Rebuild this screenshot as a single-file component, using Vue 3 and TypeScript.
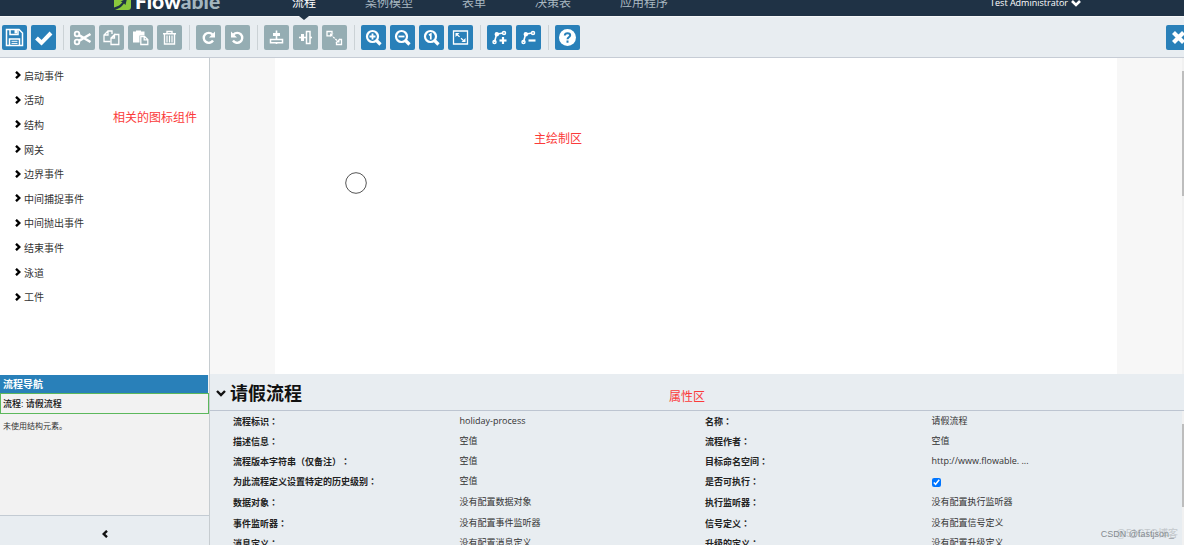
<script setup lang="ts">
import { ref } from 'vue'

interface Tool {
  name: string
  title: string
  disabled?: boolean
}

interface Property {
  label: string
  value: string | boolean
}

const menu = ['流程', '案例模型', '表单', '决策表', '应用程序']

const toolGroups: Tool[][] = [
  [
    { name: 'save', title: '保存' },
    { name: 'check', title: '验证' },
  ],
  [
    { name: 'cut', title: '剪切', disabled: true },
    { name: 'copy', title: '复制', disabled: true },
    { name: 'paste', title: '粘贴', disabled: true },
    { name: 'trash', title: '删除', disabled: true },
  ],
  [
    { name: 'redo', title: '重做', disabled: true },
    { name: 'undo', title: '撤销', disabled: true },
  ],
  [
    { name: 'alignV', title: '垂直对齐', disabled: true },
    { name: 'alignH', title: '水平对齐', disabled: true },
    { name: 'sameSize', title: '相同大小', disabled: true },
  ],
  [
    { name: 'zoomIn', title: '放大' },
    { name: 'zoomOut', title: '缩小' },
    { name: 'zoomOne', title: '实际大小' },
    { name: 'zoomFit', title: '适合窗口' },
  ],
  [
    { name: 'bendAdd', title: '添加弯曲点' },
    { name: 'bendRemove', title: '移除弯曲点' },
  ],
  [{ name: 'help', title: '帮助' }],
]

const palette = [
  '启动事件', '活动', '结构', '网关', '边界事件',
  '中间捕捉事件', '中间抛出事件', '结束事件', '泳道', '工件',
]

const properties = ref<Property[]>([
  { label: '流程标识', value: 'holiday-process' },
  { label: '名称', value: '请假流程' },
  { label: '描述信息', value: '空值' },
  { label: '流程作者', value: '空值' },
  { label: '流程版本字符串（仅备注）', value: '空值' },
  { label: '目标命名空间', value: 'http://www.flowable. ...' },
  { label: '为此流程定义设置特定的历史级别', value: '空值' },
  { label: '是否可执行', value: true },
  { label: '数据对象', value: '没有配置数据对象' },
  { label: '执行监听器', value: '没有配置执行监听器' },
  { label: '事件监听器', value: '没有配置事件监听器' },
  { label: '信号定义', value: '没有配置信号定义' },
  { label: '消息定义', value: '没有配置消息定义' },
  { label: '升级的定义', value: '没有配置升级定义' },
])
</script>

<template>
  <div class="page">
    <header class="topbar">
      <a class="logo" href="#">
        <svg class="leaf" viewBox="0 0 17 17" aria-hidden="true">
          <path d="M3 0H17V14Q17 17 14 17H0V3Q0 0 3 0Z" fill="#8ac73c" />
          <path d="M0 14.500Q6 13 8.500 9L6.500 8.500L13 5.500L11.500 12L10 10.500Q7 15 1 17L0 17Z" fill="#1f3245" />
        </svg>
        <span class="wordmark">Flow<span class="dim">able</span></span>
      </a>
      <nav class="menu">
        <a v-for="(item, i) in menu" :key="item" href="#" :class="{ active: i === 0 }">{{ item }}</a>
      </nav>
      <button class="user" type="button">
        Test Administrator
        <svg viewBox="0 0 10 8" aria-hidden="true"><path d="M1 2L5 6L9 2" fill="none" stroke="#fff" stroke-width="2.600" /></svg>
      </button>
    </header>

    <div class="toolbar">
      <div v-for="(group, g) in toolGroups" :key="g" class="group">
        <button v-for="tool in group" :key="tool.name" class="tool" type="button" :title="tool.title" :aria-label="tool.title" :disabled="tool.disabled">
          <svg viewBox="0 0 25 25" fill="none" stroke="#fff" stroke-width="1.500" aria-hidden="true">
            <template v-if="tool.name === 'save'">
              <path d="M4.500 4.500H17L20.500 8V20.500H4.500Z" />
              <path d="M8 4.500V9.500H16V4.500M7.500 20.500V14H17.500V20.500" />
              <path d="M12.500 5H15V8.500H12.500Z" fill="#fff" stroke="none" />
              <path d="M9.500 16.300H15.500M9.500 18.400H15.500" stroke-width="1" />
            </template>
            <path v-else-if="tool.name === 'check'" d="M5.500 13L10.500 17.800L20 8" stroke-width="4" />
            <template v-else-if="tool.name === 'cut'">
              <circle cx="7" cy="9" r="2.300" stroke-width="1.800" />
              <circle cx="7" cy="17" r="2.300" stroke-width="1.800" />
              <path d="M9 10.200L20.500 17M9 15.800L20.500 9" stroke-width="2.500" />
            </template>
            <template v-else-if="tool.name === 'copy'">
              <path d="M11.500 16.500H5V10L9 6H13V9M9 6V10H5" stroke-width="1.300" />
              <path d="M15.500 9.500H19.800V19.500H12V13L15.500 9.500V13H12" stroke-width="1.300" />
            </template>
            <template v-else-if="tool.name === 'paste'">
              <path d="M5 6.500H8V5.500H13V6.500H16.500V10.500H11.500V17.500H5Z" fill="#fff" stroke="none" />
              <path d="M12.800 11.500H16.500L19.800 14.500V19.500H12.800ZM16.200 11.500V14.800H19.800" stroke-width="1.300" />
            </template>
            <template v-else-if="tool.name === 'trash'">
              <path d="M7.500 9.500V19H17.500V9.500M6 8.700H19M10 8.500V6.500H15V8.500" stroke-width="1.400" />
              <path d="M10 10.500V17.500M12.500 10.500V17.500M15 10.500V17.500" stroke-width="1.200" />
            </template>
            <template v-else-if="tool.name === 'redo'">
              <path d="M16.500 9.500A5 5 0 1 0 17 15.500" stroke-width="2.400" />
              <path d="M19 6.500V12.500H13Z" fill="#fff" stroke="none" />
            </template>
            <template v-else-if="tool.name === 'undo'">
              <path d="M8.500 9.500A5 5 0 1 1 8 15.500" stroke-width="2.400" />
              <path d="M6 6.500V12.500H12Z" fill="#fff" stroke="none" />
            </template>
            <template v-else-if="tool.name === 'alignV'">
              <path d="M12.500 5.500V19" stroke-width="1.600" />
              <path d="M9 8H16V11H9Z" fill="#fff" stroke="none" />
              <path d="M6.500 14.500H18.500V17.800H6.500Z" fill="#95adb3" />
            </template>
            <template v-else-if="tool.name === 'alignH'">
              <path d="M6 12.500H19" stroke-width="1.600" />
              <path d="M8 9H11V16H8Z" fill="#fff" stroke="none" />
              <path d="M13.500 6.500H17V18.500H13.500Z" fill="#95adb3" />
            </template>
            <template v-else-if="tool.name === 'sameSize'">
              <path d="M8.500 10.800H5V6.500H10V8.500M17 14.500H19.500V19.500H14.500V17" stroke-width="1.300" />
              <path d="M9 10L15.500 16" stroke-width="1.300" stroke-dasharray="2 1" />
              <path d="M8 8.500H11.500L8 12ZM17.500 17.500H13.500L17.500 13.500Z" fill="#fff" stroke="none" />
            </template>
            <template v-else-if="tool.name.startsWith('zoom') && tool.name !== 'zoomFit'">
              <circle cx="11.500" cy="11.500" r="5.500" stroke-width="2.200" />
              <path d="M15.500 15.500L19.500 19.500" stroke-width="3.200" />
              <path v-if="tool.name === 'zoomIn'" d="M8.500 11.500H14.500M11.500 8.500V14.500" stroke-width="1.800" />
              <path v-else-if="tool.name === 'zoomOut'" d="M8.500 11.500H14.500" stroke-width="1.800" />
              <path v-else d="M10 10.200L11.800 9V14.500" stroke-width="1.700" />
            </template>
            <template v-else-if="tool.name === 'zoomFit'">
              <path d="M5.500 6H19.500V19H5.500Z" stroke-width="1.300" />
              <path d="M9 9.500L16 16" stroke-width="1.300" stroke-dasharray="3.500 2" />
              <path d="M7.500 8H11.500L7.500 12ZM17.500 17H13.500L17.500 13Z" fill="#fff" stroke="none" />
            </template>
            <template v-else-if="tool.name === 'bendAdd' || tool.name === 'bendRemove'">
              <path d="M7.500 17L9.500 9.500M10.500 9L16 8" stroke-width="1.600" />
              <circle cx="7.500" cy="17" r="1.500" />
              <circle cx="9.800" cy="9.300" r="1.500" fill="#fff" />
              <circle cx="17" cy="8" r="1.500" />
              <path d="M12.500 15.500H19.500" stroke-width="2.200" />
              <path v-if="tool.name === 'bendAdd'" d="M16 12V19" stroke-width="2.200" />
            </template>
            <template v-else>
              <circle cx="12.500" cy="12.500" r="8.500" fill="#fff" stroke="none" />
              <path d="M9.800 10.500Q10 8.200 12.500 8.200Q15.200 8.200 15.200 10.300Q15.200 11.500 13.700 12.300Q12.500 13 12.500 14.300M12.500 15.500V17.700" stroke="#2980b9" stroke-width="2" />
            </template>
          </svg>
        </button>
      </div>
      <button class="tool close" type="button" title="关闭" aria-label="关闭">
        <svg viewBox="0 0 25 25" aria-hidden="true"><path d="M7.500 7.500L17.500 17.500M17.500 7.500L7.500 17.500" fill="none" stroke="#fff" stroke-width="4.200" /></svg>
      </button>
    </div>

    <div class="body">
      <aside class="sidebar">
        <ul class="palette">
          <li v-for="name in palette" :key="name">
            <button type="button">
              <svg viewBox="0 0 6 8" aria-hidden="true"><path d="M1 0.800L4.300 4L1 7.200" fill="none" stroke="#000" stroke-width="2.400" /></svg>
              {{ name }}
            </button>
          </li>
        </ul>
        <section class="navigator">
          <h2>流程导航</h2>
          <div class="current">流程: 请假流程</div>
          <p>未使用结构元素。</p>
        </section>
        <button class="collapse" type="button" aria-label="收起">
          <svg viewBox="0 0 6 8" aria-hidden="true"><path d="M5 0.800L1.700 4L5 7.200" fill="none" stroke="#111" stroke-width="2.400" /></svg>
        </button>
        <span class="note palette-note">相关的图标组件</span>
      </aside>

      <main class="main">
        <section class="workspace">
          <div class="canvas">
            <svg class="start-event" viewBox="0 0 22 22" aria-label="启动事件"><circle cx="11" cy="11" r="10.300" fill="#fff" stroke="#555" stroke-width="1" /></svg>
            <span class="note canvas-note">主绘制区</span>
          </div>
          <div class="track"><div class="thumb workspace-thumb"></div></div>
        </section>
        <section class="panel">
          <h1>
            <button type="button">
              <svg viewBox="0 0 10 8" aria-hidden="true"><path d="M1 2L5 6L9 2" fill="none" stroke="#111" stroke-width="2.400" /></svg>
              请假流程
            </button>
            <span class="note panel-note">属性区</span>
          </h1>
          <div class="panel-body">
            <div class="properties">
              <template v-for="(p, i) in properties" :key="p.label">
                <label v-if="typeof p.value === 'boolean'" class="label" :for="'prop-' + i">{{ p.label }}<span class="colon">：</span></label>
                <span v-else class="label">{{ p.label }}<span class="colon">：</span></span>
                <span v-if="typeof p.value === 'boolean'" class="value">
                  <input :id="'prop-' + i" v-model="p.value" type="checkbox" />
                </span>
                <span v-else class="value">{{ p.value }}</span>
              </template>
            </div>
            <div class="track"><div class="thumb panel-thumb"></div></div>
          </div>
        </section>
      </main>
    </div>
    <span class="mark mark-back">@51CTO博客</span>
    <span class="mark mark-front">CSDN @fastjson_</span>
  </div>
</template>

<style>
body {
  margin: 0;
}
</style>

<style scoped>
.page {
  position: relative;
  display: flex;
  flex-direction: column;
  height: 100vh;
  overflow: hidden;
  font-family: "Open Sans", "Noto Sans CJK SC", sans-serif;
  font-size: 9px;
  color: #333;
}
button {
  padding: 0;
  border: 0;
  background: none;
  font: inherit;
  color: inherit;
  cursor: pointer;
}
a {
  text-decoration: none;
}
.topbar {
  display: flex;
  flex: none;
  align-items: flex-end;
  height: 16px;
  padding: 0 103px 0 114px;
  background: #1f3245;
  line-height: 26px;
}
.logo {
  display: flex;
  flex: none;
  align-items: center;
  gap: 4px;
  width: 178px;
  color: #fff;
  line-height: 30px;
}
.leaf {
  width: 17px;
  height: 17px;
}
.wordmark {
  font-family: Lato, "Liberation Sans", sans-serif;
  font-size: 21px;
  font-weight: 900;
}
.dim {
  color: #a3b6bf;
}
.menu {
  display: flex;
  flex: 1;
  gap: 49px;
  font-size: 12px;
}
.menu a {
  position: relative;
  color: #a9b8c1;
}
.menu a.active {
  color: #fff;
}
.menu a.active::after {
  content: "";
  position: absolute;
  top: 26px;
  left: 50%;
  margin-left: -5px;
  border: 5px solid transparent;
  border-top: 4px solid #1f3245;
  border-bottom: 0;
}
.user {
  display: flex;
  align-items: center;
  gap: 3px;
  color: #fff;
  line-height: 26px;
}
.user svg,
.panel h1 svg {
  width: 10px;
  height: 8px;
}
.toolbar {
  display: flex;
  flex: none;
  align-items: center;
  box-sizing: border-box;
  height: 42px;
  padding-left: 2px;
  overflow: hidden;
  border-top: 1px solid #f6f8f9;
  border-bottom: 1px solid #c6ccd5;
  background: #e8edf1;
}
.group {
  display: flex;
  gap: 4px;
}
.group + .group {
  margin-left: 7px;
  padding-left: 6px;
  border-left: 1px solid #cbd2d6;
}
.tool {
  flex: none;
  width: 25px;
  height: 25px;
  border-radius: 2px;
  background: #2980b9;
}
.tool:disabled {
  background: #95adb3;
}
.tool svg {
  display: block;
  width: 25px;
  height: 25px;
}
.close {
  margin: 0 -7px 0 auto;
}
.body {
  display: flex;
  flex: 1;
  min-height: 0;
}
.sidebar {
  position: relative;
  display: flex;
  flex: none;
  flex-direction: column;
  width: 209px;
  border-right: 1px solid #c6ccd0;
}
.palette {
  display: flex;
  flex: 1;
  flex-direction: column;
  margin: 0;
  padding: 5px 15px 66px;
  list-style: none;
  font-size: 10px;
}
.palette li {
  display: flex;
  flex: 1;
  align-items: center;
}
.palette button {
  display: flex;
  align-items: center;
  gap: 3px;
}
.palette svg,
.collapse svg {
  width: 6px;
  height: 8px;
}
.navigator {
  flex: none;
  height: 140px;
  background: #f2f2f2;
}
.navigator h2 {
  margin: 0 1px 0 0;
  padding-left: 3px;
  background: #2980b9;
  color: #fff;
  font-size: 10px;
  line-height: 18px;
}
.current {
  padding-left: 2px;
  border: 1px solid #5cb85c;
  color: #111;
  font-weight: 500;
  line-height: 19px;
}
.navigator p {
  margin: 0;
  padding: 3px;
  font-size: 8px;
  line-height: 18px;
}
.collapse {
  display: flex;
  flex: none;
  align-items: center;
  justify-content: center;
  height: 30px;
  padding-top: 6px;
  border-top: 1px solid #c3cbd3;
  background: #e8edf1;
}
.main {
  display: flex;
  flex: 1;
  flex-direction: column;
  min-width: 0;
}
.workspace {
  display: flex;
  flex: 1;
  background: #f7f7f7;
}
.canvas {
  position: relative;
  width: 842px;
  max-width: 87%;
  margin: 0 auto;
  background: #fff;
}
.start-event {
  position: absolute;
  top: 114px;
  left: 70px;
  width: 22px;
  height: 22px;
}
.track {
  flex: none;
  width: 2px;
  background: #f1f1f1;
}
.thumb {
  background: #bdbdbd;
}
.workspace-thumb {
  height: 125px;
  margin-top: 13px;
}
.panel-thumb {
  height: 83px;
  margin-top: 13px;
}
.panel {
  display: flex;
  flex: none;
  flex-direction: column;
  height: 171px;
  overflow: hidden;
  background: #e8edf1;
}
.panel h1 {
  position: relative;
  flex: none;
  margin: 0;
  padding: 2px 0 0 6px;
  border-bottom: 1px solid #bdc5d1;
  color: #111;
  font-size: 18px;
  line-height: 34px;
}
.panel h1 button {
  display: flex;
  align-items: center;
  gap: 4px;
}
.panel-body {
  display: flex;
  flex: 1;
  align-items: flex-start;
  min-height: 0;
}
.panel-body .track {
  align-self: stretch;
}
.properties {
  display: grid;
  flex: 1;
  grid-template-columns: 12fr 13fr 12fr 13fr;
  grid-auto-rows: 1fr;
  height: 142px;
  padding: 1px 5px 0 23px;
  line-height: 20px;
}
.label {
  color: #222;
  font-weight: 700;
  white-space: nowrap;
  text-spacing-trim: space-all;
}
.colon {
  font-family: "Noto Sans CJK TC", sans-serif;
}
.value {
  line-height: 18px;
}
.value input {
  width: 9px;
  height: 9px;
  margin: 6px 0;
}
.note {
  position: absolute;
  color: #fb3a3a;
  font-size: 12px;
  font-weight: 400;
  line-height: 18px;
  white-space: nowrap;
}
.palette-note {
  top: 51px;
  left: 113px;
}
.canvas-note {
  top: 72px;
  left: 259px;
}
.panel-note {
  top: 14px;
  left: 459px;
}
.mark {
  position: absolute;
  bottom: 3px;
  font-family: "Liberation Sans", "Noto Sans CJK SC", sans-serif;
  line-height: 16px;
  white-space: nowrap;
}
.mark-back {
  right: 6px;
  color: #c3c8cc;
  font-size: 10px;
}
.mark-front {
  right: 10px;
  color: #858b90;
  font-size: 9px;
}
</style>
